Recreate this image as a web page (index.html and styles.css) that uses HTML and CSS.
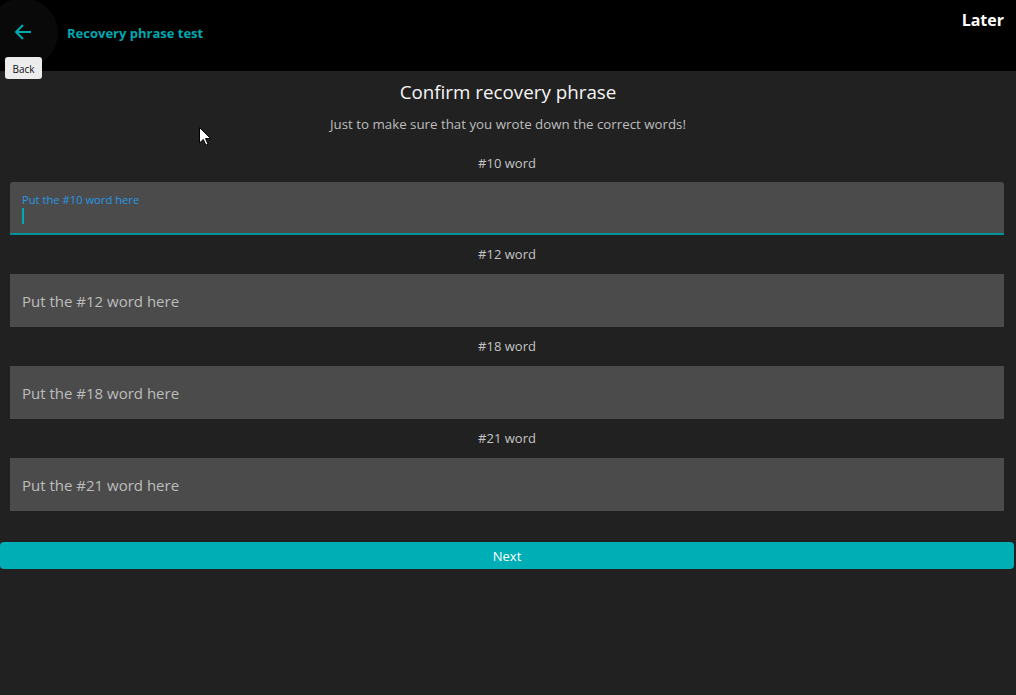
FILE: index.html
```html
<!DOCTYPE html>
<html>
<head>
<meta charset="utf-8">
<link rel="stylesheet" href="styles.css">
</head>
<body>
<header class="topbar">
  <div class="back">
    <span class="ripple"></span>
    <svg class="back-icon" width="20" height="20" viewBox="0 0 20 20"><path d="M18 10H3M10 3L3 10l7 7" fill="none" stroke="#00aab2" stroke-width="2"/></svg>
    <span class="tooltip">Back</span>
  </div>
  <div class="page-title">Recovery phrase test</div>
  <div class="later">Later</div>
</header>
<main class="content">
  <h1 class="heading">Confirm recovery phrase</h1>
  <p class="sub">Just to make sure that you wrote down the correct words!</p>
  <div class="field first">
    <div class="label">#10 word</div>
    <div class="input focused">
      <span class="float">Put the #10 word here</span>
      <span class="caret"></span>
    </div>
  </div>
  <div class="field">
    <div class="label">#12 word</div>
    <div class="input"><span class="ph">Put the #12 word here</span></div>
  </div>
  <div class="field">
    <div class="label">#18 word</div>
    <div class="input"><span class="ph">Put the #18 word here</span></div>
  </div>
  <div class="field">
    <div class="label">#21 word</div>
    <div class="input"><span class="ph">Put the #21 word here</span></div>
  </div>
  <button class="next">Next</button>
</main>
<svg class="cursor" width="12" height="19" viewBox="0 0 12 19"><path d="M0.5 0.5V16l3.8-3.6 2.6 5.8 2.2-1-2.6-5.6h5.2z" fill="#fff" stroke="#000" stroke-width="1"/></svg>
</body>
</html>
```
FILE: styles.css
```css
* { box-sizing: border-box; }
html, body { margin: 0; padding: 0; }
body {
  width: 1016px;
  height: 695px;
  background: #212121;
  font-family: "Open Sans", "Noto Sans", sans-serif;
  overflow: hidden;
  position: relative;
}
.topbar {
  height: 71px;
  background: #000;
  display: flex;
  align-items: flex-start;
  position: relative;
}
.back {
  position: relative;
  width: 55px;
  height: 64px;
  flex: none;
}
.ripple {
  position: absolute;
  left: -12px;
  top: -2px;
  width: 70px;
  height: 70px;
  border-radius: 50%;
  background: #090909;
}
.back-icon {
  position: absolute;
  left: 13px;
  top: 22px;
}
.tooltip {
  position: absolute;
  left: 5px;
  top: 57px;
  width: 37px;
  height: 22px;
  background: #ececec;
  border-radius: 3px;
  color: #111;
  font-size: 10px;
  display: flex;
  align-items: center;
  justify-content: center;
  padding-top: 2px;
  z-index: 2;
}
.page-title {
  margin-left: 12px;
  margin-top: 24px;
  font-size: 13px;
  font-weight: 700;
  color: #00a9b1;
  flex: 1;
}
.later {
  margin-top: 9px;
  margin-right: 12px;
  font-size: 16px;
  font-weight: 700;
  color: #fff;
}
.content {
  display: flex;
  flex-direction: column;
  align-items: stretch;
}
.heading {
  margin: 8px 0 0;
  font-size: 18.8px;
  font-weight: 400;
  color: #f5f5f5;
  text-align: center;
  line-height: 27px;
}
.sub {
  margin: 8px 0 0;
  font-size: 13.3px;
  color: #bdbdbd;
  text-align: center;
  line-height: 20px;
}
.field {
  display: flex;
  flex-direction: column;
  padding: 0 12px 0 10px;
}
.label {
  font-size: 13px;
  color: #c4c4c4;
  text-align: center;
  height: 39px;
  line-height: 20px;
  padding-top: 9px;
}
.field.first .label { height: 48px; padding-top: 19px; }
.input {
  height: 53px;
  background: #4b4b4b;
  display: flex;
  align-items: center;
  padding-left: 12px;
  position: relative;
}
.input.focused {
  border-radius: 3px 3px 0 0;
  border-bottom: 2px solid #00919a;
  display: block;
}
.float {
  position: absolute;
  left: 12px;
  top: 10px;
  font-size: 11.2px;
  color: #2699e8;
}
.caret {
  position: absolute;
  left: 12px;
  top: 26px;
  width: 2px;
  height: 16px;
  background: #00aab2;
}
.ph {
  font-size: 15px;
  color: #bdbdbd;
}
.next {
  margin: 31px 2px 0 0;
  height: 27px;
  border: none;
  border-radius: 4px;
  background: #00aeb6;
  color: #fff;
  font-family: inherit;
  font-size: 13px;
  padding: 0;
}
.cursor {
  position: absolute;
  left: 199px;
  top: 127px;
}
```
